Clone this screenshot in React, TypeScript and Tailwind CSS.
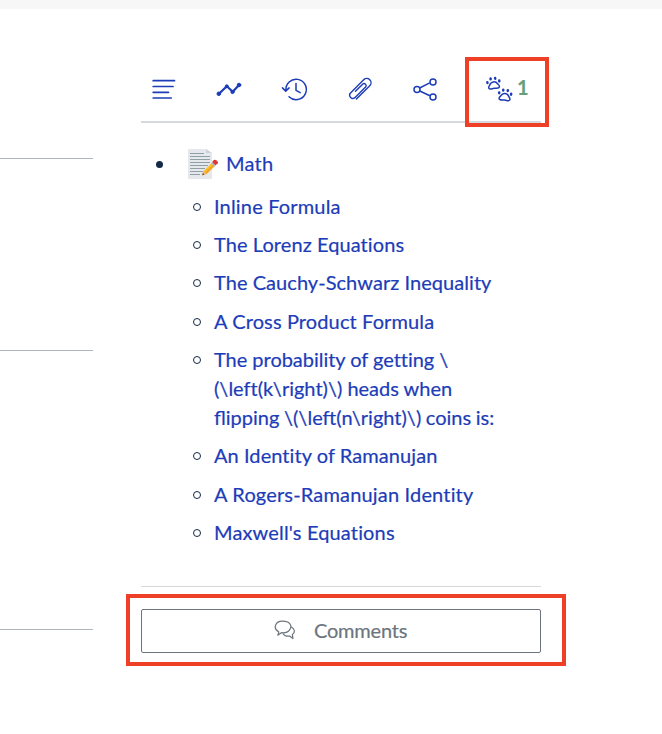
import type { ReactNode } from 'react';

type Line = { text: string; style: string };

const headings: Line[][] = [
  [{ text: 'Inline Formula', style: 'tracking-[0.17px]' }],
  [{ text: 'The Lorenz Equations', style: 'tracking-[0.08px]' }],
  [{ text: 'The Cauchy-Schwarz Inequality', style: 'tracking-[0.05px]' }],
  [{ text: 'A Cross Product Formula', style: 'tracking-[0.12px]' }],
  [
    { text: 'The probability of getting \\', style: 'tracking-[-0.03px]' },
    { text: '(\\left(k\\right)\\) heads when', style: 'tracking-normal' },
    { text: 'flipping \\(\\left(n\\right)\\) coins is:', style: '[word-spacing:-0.5px] [font-variant-ligatures:normal]' },
  ],
  [{ text: 'An Identity of Ramanujan', style: 'tracking-[0.07px]' }],
  [{ text: 'A Rogers-Ramanujan Identity', style: 'tracking-[0.17px]' }],
  [{ text: "Maxwell's Equations", style: 'tracking-[0.15px]' }],
];

function Icon({ children, width = 1.5 }: { children: ReactNode; width?: number }) {
  return (
    <svg className="block h-7 w-7 shrink-0" viewBox="0 0 28 28" fill="none" stroke="#1c3cb8" strokeWidth={width} strokeLinecap="round" strokeLinejoin="round">
      {children}
    </svg>
  );
}

function Paw() {
  return (
    <>
      <path d="M0 -1.2C2.2 -1.2 3.2 -.3 4.1 1.5C5.1 2.5 5.8 3.4 5.3 4.6C4.7 6.3 2.7 5.3 0 5.3S-4.7 6.3-5.3 4.6C-5.8 3.4-5.1 2.5-4.1 1.5C-3.2 -.3-2.2 -1.2 0 -1.2Z" />
      <g fill="#1c3cb8" stroke="none">
        <ellipse cx="-6" cy="-1.3" rx="1.3" ry="1.65" />
        <ellipse cx="-2.3" cy="-4.5" rx="1.3" ry="1.65" />
        <ellipse cx="2.3" cy="-4.5" rx="1.3" ry="1.65" />
        <ellipse cx="6" cy="-1.3" rx="1.3" ry="1.65" />
      </g>
    </>
  );
}

function Memo() {
  return (
    <svg className="block h-8 w-8 shrink-0" viewBox="0 0 32 32">
      <path d="M1 1h18l6 4v26H1z" fill="#e5e9ed" />
      <path d="M19 1v4h6z" fill="#cbd2d8" />
      <path d="M3 5.5h14M3 8.5h20M3 11.5h20M3 14.5h20M3 17.5h18M3 20.5h15M3 23.5h13M3 26.5h10" stroke="#91a0a6" strokeWidth="1" />
      <path d="M15.2 27.2l1.3-4.3 9-8.7 3 3-9 8.7z" fill="#fbc02d" />
      <path d="M18 24.3l9-8.6 1.5 1.5-9 8.7z" fill="#f5a52a" />
      <path d="M15.2 27.2l1.3-4.3 3 3z" fill="#e8b987" />
      <path d="M15.2 27.2l.7-2.2 1.5 1.5z" fill="#493b35" />
      <path d="M24.1 15.6l1.6-1.5 3 3-1.6 1.5z" fill="#aebbc2" />
      <path d="M25.2 14.1l1.3-1.8c1.5-2 5.6 1.2 4.2 3.2l-2.2 1.7z" fill="#dc3737" />
    </svg>
  );
}

export default function App() {
  return (
    <main className="relative h-[734px] w-[662px] overflow-hidden bg-white font-['Lato',sans-serif] text-xl leading-[29px] text-[#1c3cb8] [-webkit-text-stroke:0.2px] [font-variant-ligatures:none]">
      <div className="h-[9px] bg-[#f7f7f7]" />
      <div className="flex">
        <div className="mr-12 w-[93px] shrink-0 pt-[149px]">
          <div className="h-px bg-[#adb5bd]" />
          <div className="mt-[191px] h-px bg-[#adb5bd]" />
          <div className="mt-[278px] h-px bg-[#adb5bd]" />
        </div>
        <aside className="w-[400px] pt-[66px]">
          <nav className="flex h-12 items-start border-b-2 border-[#d5d9dd] pl-[9px]">
            <div className="w-[65px]">
              <Icon width={1.7}><path d="M3.2 5.7h21.3M3.2 11.5h19.8M3.2 17.3h15.3M3.2 23h18" /></Icon>
            </div>
            <div className="w-[66px]">
              <Icon width={2.2}>
                <path d="M4 18.8l7.8-7.5 6 5.5L24 10" />
                <g fill="#1c3cb8" strokeWidth="1"><circle cx="3.8" cy="18.8" r="1.8" /><circle cx="11.8" cy="11.3" r="1.5" /><circle cx="17.5" cy="17" r="1.6" /><circle cx="24" cy="10" r="1.8" /></g>
              </Icon>
            </div>
            <div className="w-[65px]">
              <Icon>
                <path d="M5 15.6A10.2 10.2 0 1 1 8 21.7M1.5 12.9l3.2 3.2 3.4-3.2M15 8.5v6.8l4.2 2.3" />
              </Icon>
            </div>
            <div className="w-[66px]">
              <Icon width={1.4}>
                <path d="M4.3 9.3V-9.5A4.3 4.3 0 0 0-4.3-9.5V9.8A3.4 3.4 0 0 0 2.2 9.8V-6A2.1 2.1 0 0 0-1.9-6V4.5" transform="translate(14 14.5) rotate(45)" />
              </Icon>
            </div>
            <div className="w-[73px]">
              <Icon>
                <path d="M7.7 13l9.5-4.8M7.7 16l9.7 4.5" />
                <circle cx="5" cy="14.5" r="3" /><circle cx="21" cy="7" r="3" /><circle cx="21" cy="22" r="3" />
              </Icon>
            </div>
            <div className="flex">
              <Icon width={1.5}>
                <g transform="translate(8.5 8.1) rotate(-8)"><Paw /></g>
                <g transform="translate(20 19.8) rotate(7)"><Paw /></g>
              </Icon>
              <span className="-mt-px ml-[4px] text-xl font-bold leading-[27px] text-[#689f7b]">1</span>
            </div>
          </nav>
          <div className="mt-[26px] flex h-[29px] items-center pl-[15px]">
            <span className="mt-px mr-6 h-[7px] w-[7px] rounded-full bg-[#142848]" />
            <Memo />
            <a className="ml-[7px] tracking-[0.25px]">Math</a>
          </div>
          <ul className="mt-[13.6px] flex flex-col gap-[9.35px] pl-[52px]">
            {headings.map((lines) => (
              <li className="flex items-start" key={lines[0].text}>
                <span className="mt-[11px] mr-[13px] h-2 w-2 shrink-0 rounded-full border border-[#142848]" />
                <a>{lines.map((line) => <span className={`block whitespace-nowrap ${line.style}`} key={line.text}>{line.text}</span>)}</a>
              </li>
            ))}
          </ul>
          <div className="mt-[39px] h-px bg-[#d8d8d8]" />
          <button className="mt-[22px] flex h-11 w-full items-center rounded-[2px] border border-[#6c757d] pl-[132px] text-[#6c757d]">
            <svg className="block h-[22px] w-[22px]" viewBox="0 0 22 22" fill="none" stroke="currentColor" strokeWidth="1.2" strokeLinejoin="round">
              <path d="M3.8 15.2l1-3.1C-1.6 8.2 1.4 1.2 8.4 1.2s10.5 4.2 7.2 8.6c-1.8 2.5-5 3.3-8.2 2.9z" />
              <path d="M17.1 6.7c4.1 2.2 4.2 6.1 1.3 7.9l.5 4-3.3-2.5c-2.5.2-5.6-.4-6.6-2.7" />
            </svg>
            <span className="mt-[-2px] ml-[18px] tracking-[-0.2px]">Comments</span>
          </button>
        </aside>
      </div>
      <div className="absolute left-[465px] top-[57px] h-[70px] w-[84px] border-4 border-[#ee4027]" />
      <div className="absolute left-[126px] top-[594px] h-[72px] w-[440px] border-4 border-[#ee4027]" />
    </main>
  );
}
